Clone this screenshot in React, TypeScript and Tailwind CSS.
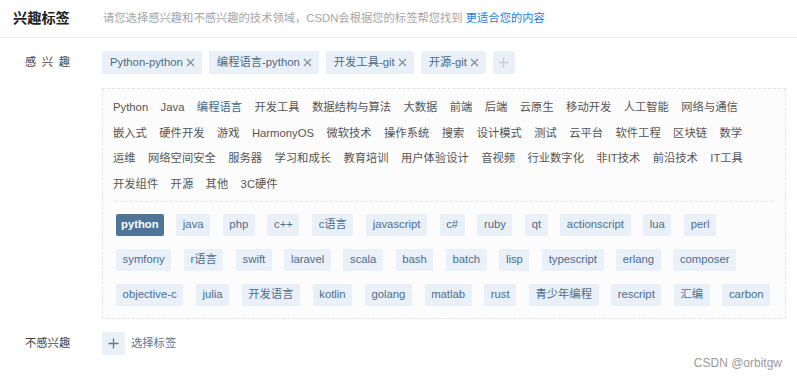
import { Fragment } from 'react'

const categoryRows: string[][] = [
  ['Python', 'Java', '编程语言', '开发工具', '数据结构与算法', '大数据', '前端', '后端', '云原生', '移动开发', '人工智能', '网络与通信'],
  ['嵌入式', '硬件开发', '游戏', 'HarmonyOS', '微软技术', '操作系统', '搜索', '设计模式', '测试', '云平台', '软件工程', '区块链', '数学'],
  ['运维', '网络空间安全', '服务器', '学习和成长', '教育培训', '用户体验设计', '音视频', '行业数字化', '非IT技术', '前沿技术', 'IT工具'],
  ['开发组件', '开源', '其他', '3C硬件'],
]

const tagRows: string[][] = [
  ['python', 'java', 'php', 'c++', 'c语言', 'javascript', 'c#', 'ruby', 'qt', 'actionscript', 'lua', 'perl'],
  ['symfony', 'r语言', 'swift', 'laravel', 'scala', 'bash', 'batch', 'lisp', 'typescript', 'erlang', 'composer'],
  ['objective-c', 'julia', '开发语言', 'kotlin', 'golang', 'matlab', 'rust', '青少年编程', 'rescript', '汇编', 'carbon'],
]

const selected = ['Python-python', '编程语言-python', '开发工具-git', '开源-git']

function CloseIcon() {
  return (
    <svg width="9" height="9" viewBox="0 0 9 9" className="text-[#7d8b99]">
      <path d="M1 1 L8 8 M8 1 L1 8" stroke="currentColor" strokeWidth="1.1" fill="none" />
    </svg>
  )
}

function PlusIcon({ size, color, width }: { size: number; color: string; width: number }) {
  return (
    <svg width={size} height={size} viewBox="0 0 12 12" style={{ color }}>
      <path d="M6 0.5 V11.5 M0.5 6 H11.5" stroke="currentColor" strokeWidth={width} fill="none" />
    </svg>
  )
}

export default function App() {
  return (
    <div className="relative w-[797px] h-[382px] overflow-hidden bg-white font-['Liberation_Sans','Noto_Sans_CJK_SC',sans-serif]">
      {/* Header */}
      <div className="flex items-center h-[38px] border-b border-[#eef0f3] pl-[13px]">
        <span className="w-[90px] text-[14.2px] font-bold text-[#222]">兴趣标签</span>
        <span className="text-[11.3px] text-[#a5a5a5]">
          请您选择感兴趣和不感兴趣的技术领域，CSDN会根据您的标签帮您找到{' '}
          <span className="text-[#2b7bd4]">更适合您的内容</span>
        </span>
      </div>

      {/* Interested */}
      <div className="flex pt-[13px]">
        <div className="w-[102px] pl-[25px]">
          <div className="flex h-[23px] w-[45px] items-center justify-between text-[11.3px] text-[#444]">
            <span>感</span>
            <span>兴</span>
            <span>趣</span>
          </div>
        </div>
        <div>
          <div className="flex gap-[7px]">
            {selected.map((t) => (
              <div
                key={t}
                className="flex h-[23px] items-center gap-[3px] rounded-[2px] bg-[#e9f0f7] pl-[8px] pr-[7px] text-[11.3px] text-[#4d6984]"
              >
                <span>{t}</span>
                <CloseIcon />
              </div>
            ))}
            <div className="flex h-[23px] w-[22px] items-center justify-center rounded-[2px] bg-[#e9f0f7]">
              <PlusIcon size={11} color="#c5ced7" width={1.4} />
            </div>
          </div>

          <div className="mt-[14px] w-[684px] border border-dashed border-[#e3e3e3] bg-[#fcfcfc]">
            <div className="pl-[10px] pt-[5.5px]">
              {categoryRows.map((row, i) => (
                <div key={i} className="flex h-[25.67px] items-center gap-x-[12.4px] text-[11.3px] text-[#555]">
                  {row.map((c) => (
                    <span key={c} className={c === '编程语言' ? 'text-[#44668a]' : ''}>
                      {c}
                    </span>
                  ))}
                </div>
              ))}
            </div>
            <div className="mx-[12px] mt-[3.5px] border-t border-dashed border-[#e6e6e6]" />
            <div className="flex flex-col gap-y-[13px] px-[13px] pb-[12px] pt-[12px]">
              {tagRows.map((row, i) => (
                <div key={i} className="flex gap-x-[12.6px]">
                  {row.map((t) => (
                    <Fragment key={t}>
                      {t === 'python' ? (
                        <div className="flex h-[22px] items-center rounded-[2px] bg-[#4e7598] px-[5px] text-[11.3px] font-bold text-white">
                          {t}
                        </div>
                      ) : (
                        <div className="flex h-[22px] items-center rounded-[2px] bg-[#e9f0f7] px-[6.6px] text-[11.3px] text-[#4c6d8f]">
                          {t}
                        </div>
                      )}
                    </Fragment>
                  ))}
                </div>
              ))}
            </div>
          </div>
        </div>
      </div>

      {/* Not interested */}
      <div className="mt-[13px] flex items-center">
        <div className="w-[102px] pl-[25px] text-[11.3px] text-[#444]">不感兴趣</div>
        <div className="flex h-[23px] w-[23px] items-center justify-center rounded-[2px] bg-[#e9f0f7]">
          <PlusIcon size={11} color="#5d7790" width={1.4} />
        </div>
        <span className="ml-[6px] text-[11.3px] text-[#5d7892]">选择标签</span>
      </div>

      {/* Watermark */}
      <div className="absolute right-[15px] bottom-[10px] text-[12px] text-[#9a9a9a]">CSDN @orbitgw</div>
    </div>
  )
}
